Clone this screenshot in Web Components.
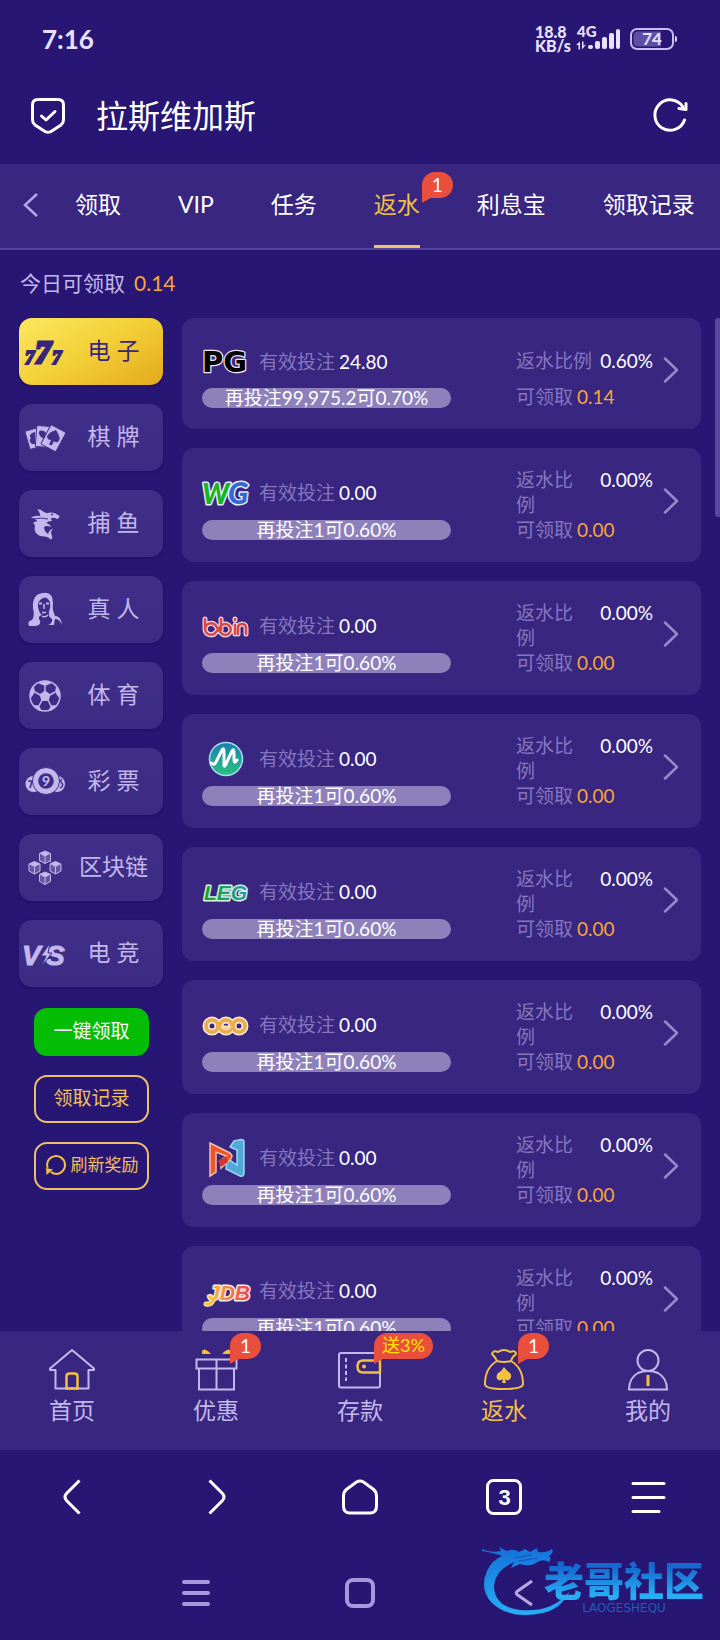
<!DOCTYPE html>
<html lang="zh-CN">
<head>
<meta charset="UTF-8">
<meta name="viewport" content="width=device-width, initial-scale=1">
<title>拉斯维加斯</title>
<style>
    body {
        --bg: #271673;
        --panel: #382680;
        --soft: #c3b8ec;
        --label: #8576be;
        --gold: #f2c144;
        --orange: #f7a53c;
        --red: #ea4f3d;
        margin: 0;
        background: var(--bg);
        color: #fff;
        font-family: Lato, "Noto Sans CJK SC", sans-serif;
        font-size: 19px;
    }
</style>
</head>
<body>
<rebate-app></rebate-app>

<script>
const ICONS = {
    shield: [34, 36, `<g fill="none" stroke="#fff" stroke-width="3" stroke-linecap="round" stroke-linejoin="round"><path d="M7 1.5H27Q32.5 1.5 32.5 7V22Q32.5 25 30 27L20 33.5Q17 35 14 33.5L4 27Q1.5 25 1.5 22V7Q1.5 1.5 7 1.5Z"/><path d="M10.500 18l4.500 4 9-8.500"/></g>`],
    reload: [36, 36, `<g fill="none" stroke="#fff" stroke-width="3" stroke-linecap="round" stroke-linejoin="round"><path d="M32.500 23A15.200 15.200 0 1 1 31 10"/><path d="M34 6.500V12.500L27 11.500"/></g>`],
    prev: [15, 24, `<path d="M14 1L2 12L14 23" fill="none" stroke="#b3a5e6" stroke-width="2.500"/>`],
    next: [16, 26, `<path d="M2 1.500L14 13L2 24.500" fill="none" stroke="#988ac9" stroke-width="2.500" stroke-linecap="round" stroke-linejoin="round"/>`],
    signal: [48, 26, `<text x="2" y="11" font-size="15" font-weight="900" fill="#e9e1ff">4G</text>
        <g fill="#e9e1ff"><path d="M1 19l4-3.500v8H3.500v-4.500zM7 15.500h1.500v4l2.500-1-4 5z"/>
        <rect x="13" y="19" width="5" height="4" rx="2"/><rect x="20" y="15" width="5" height="8" rx="2"/><rect x="27" y="11" width="5" height="12" rx="2"/><rect x="34" y="7" width="5" height="16" rx="2"/><rect x="41" y="3" width="4" height="20" rx="2"/></g>`],
    battery: [48, 22, `<rect x="1" y="1" width="42" height="20" rx="6" fill="none" stroke="#c9bdf2" stroke-width="2"/><path d="M8 3.500H31V18.500H8Q3.500 18.500 3.500 14V8Q3.500 3.500 8 3.500Z" fill="#5e4fa6"/><path d="M45 8q2 0 2 3t-2 3z" fill="#e9e1ff"/><text x="22" y="17" text-anchor="middle" font-size="17" font-weight="bold" fill="#e9e1ff">74</text>`],

    slots: [42, 42, `<g fill="#38267d" font-family="Liberation Serif" font-weight="bold" font-style="italic" stroke="#38267d" stroke-width="2"><text x="1" y="33" font-size="19">7</text><text x="28" y="33" font-size="19">7</text><text x="11" y="32" font-size="32" stroke-width="3">7</text></g>`],
    cards: [42, 42, `<g fill="#c3b8ec" stroke="#41308a" stroke-width="1"><rect x="3" y="12" width="14" height="19" rx="1" transform="rotate(-16 10 21)"/><rect x="12" y="9" width="15" height="21" rx="1" transform="rotate(4 19 20)"/><rect x="21" y="10" width="17" height="22" rx="1" transform="rotate(28 29 21)"/></g>
        <g fill="#41308a"><path d="M8 16q-4 3-1 5-3 3 1 6l3 0V15z"/><path d="M20 14q-6-2-5 3 1 3 5 5l2-6z"/><path d="M32 13q6 9 2 12-3 1-4-1l-2 4h-3l2-5q-4 0-4-4 2-4 9-6z"/></g>`],
    shark: [42, 42, `<path fill="#c3b8ec" d="M13.300 6.200Q17 6 20 9L23 10.200Q29 8 35.300 12.800Q36 15 33 16Q30 14 26.700 15.500L28 18Q23 18 22.700 20.200Q26 21 27 24Q22 22 20 24.200Q20 28 24 31Q25 27 28.700 25.500Q26 30 28 32.500Q29 35 26.700 36.800Q25 34 21 33.500Q11 34 10.500 25Q12 22 9 20Q11 18 13.500 18.200Q11 15 7 14.200Q12 12 16.500 13Q16 9 13.300 6.200Z"/><path d="M10 16Q16 14 24 16" stroke="#41308a" fill="none"/><circle cx="28" cy="11.500" r="1" fill="#41308a"/>`],
    lady: [42, 42, `<path fill="#c3b8ec" d="M19 4Q29 2 29 15Q28 20 31 27Q37 27 38 36Q35 29 31 30Q30 35 30 36H24Q29 34 28 30Q24 28 25 23Q27 18 26 13Q23 7 19 9Q13 12 14 18Q15 24 18 26Q13 27 16 32Q17 36 12 37H5Q3 32 8 31Q11 27 9 19Q8 5 19 4Z"/><g stroke="#c3b8ec" fill="none"><path d="M15 14.500h3M22 14.500h3" stroke-width="2"/><path d="M20 15v5M18 23.500h4M18 27q3 2 6-1" stroke-width="1.500"/></g>`],
    ball: [42, 42, `<circle cx="21" cy="21" r="15" fill="none" stroke="#c3b8ec" stroke-width="1.500"/><path fill="#c3b8ec" d="M21 15.500l5.500 4-2 6.500h-7l-2-6.500zM14 8q7-4 14 0l-7 3zM6 17l4-5 1 5-4 6zM36 17l-4-5-1 5 4 6zM10 30l5 .500 2.500 5q-5-1-7.500-5.500zM32 30l-5 .500-2.500 5q5-1 7.500-5.500z"/><path stroke="#c3b8ec" stroke-width="1.500" d="M21 16v-5M26 20l5-3M16 20l-5-3M18 25l-3 6M24 25l3 6"/>`],
    lottery: [42, 42, `<g fill="#c3b8ec"><circle cx="9.500" cy="23" r="8"/><circle cx="33" cy="23" r="8"/><circle cx="22" cy="20" r="13.500" stroke="#3f2e88"/></g><g fill="none" stroke="#3f2e88" stroke-width="1.500"><path d="M4 20h4l-2 7M38 18q-3 2 0 4 2 3-2 5"/></g><circle cx="22" cy="20" r="7.800" fill="#3f2e88"/><text x="22" y="25" text-anchor="middle" font-size="14" font-weight="900" fill="#c3b8ec">9</text>`],
    chain: [42, 42, `<path d="M21 10L33 20 21 31 10 20Z" fill="none" stroke="#c3b8ec" stroke-dasharray="3 2"/>
        ${[[21, 10], [10.5, 20.5], [31.5, 20.5], [21, 31]].map(([x, y]) => `<g transform="translate(${x} ${y})"><path d="M-5.500-3.500L0-6 5.500-3.500V3.500L0 6.500-5.500 3.500Z" fill="#66559f" stroke="#c3b8ec"/><path d="M-5.500-3.500L0-6 5.500-3.500 0-.500Z" fill="#c3b8ec"/><path d="M0-.500V6.500" stroke="#c3b8ec"/></g>`).join('')}`],
    versus: [42, 42, `<g fill="#c3b8ec" font-family="Liberation Sans" font-style="italic" font-weight="bold" font-size="28" stroke="#c3b8ec"><text x="-2" y="32">V</text><text x="22" y="32">S</text></g><path d="M26 10L17 23h5l-5 11L28 20h-4z" fill="#c3b8ec" stroke="#3f2e88"/>`],
    cycle: [22, 22, `<path d="M2.500 14A9 9 0 1 1 12 20Q8 20 6 18" fill="none" stroke="#f2c144" stroke-width="2"/><path d="M1 14l7 1.500L1.500 21z" fill="#f2c144"/>`],

    pg: [48, 40, `<text x="0" y="31" font-family="DejaVu Sans" font-weight="bold" font-size="29" fill="#000" stroke="#f3e4ef" stroke-width="2.500" stroke-linejoin="round" paint-order="stroke">PG</text>`],
    wg: [48, 40, `<g font-family="Lato" font-weight="900" stroke="#e5eef5" stroke-width="3" stroke-linejoin="round" paint-order="stroke"><text x="26" y="31" font-size="30" font-style="italic" fill="#3467d8">G</text><text x="0" y="31" font-size="28" font-style="italic" fill="#18b51e">W</text></g>`],
    bbin: [48, 40, `<g fill="none" stroke-linecap="round" stroke-linejoin="round"><path d="M3 13V23a6 6 0 0 0 11 3l5-6a5.500 5.500 0 1 1 0 7l-5-7a6 6 0 0 0-11 3M19 13V24M33 19V28M33 13V14M36 28V22q0-4 4-4t4 4v6" stroke="#f1d5ea" stroke-width="5"/><path d="M3 13V23a6 6 0 0 0 11 3l5-6a5.500 5.500 0 1 1 0 7l-5-7a6 6 0 0 0-11 3M19 13V24M33 19V28M33 13V14M36 28V22q0-4 4-4t4 4v6" stroke="#d84a3f" stroke-width="2.500"/></g>`],
    mg: [48, 40, `<defs><linearGradient id="m" x2="0" y2="1"><stop stop-color="#177fb3"/><stop offset="1" stop-color="#2bc280"/></linearGradient></defs><circle cx="24" cy="20" r="16.500" fill="url(#m)" stroke="#a9dbef" stroke-width="1.500"/><path d="M9.500 24Q12 27 14 23L20 11Q22 8 22 13V26Q22 29 24 25L30 12Q32 9 32 14V20Q32 26 35 21" fill="none" stroke="#fff" stroke-width="3" stroke-linecap="round"/>`],
    leg: [48, 40, `<defs><linearGradient id="l"><stop stop-color="#1aa21f"/><stop offset="1" stop-color="#2399be"/></linearGradient></defs><text x="2" y="28" font-family="Liberation Sans" font-style="italic" font-weight="bold" font-size="21" fill="url(#l)" stroke="#d9f4df" stroke-width="3" stroke-linejoin="round" paint-order="stroke">LEG</text>`],
    ceo: [48, 40, `<g fill="none"><g stroke="#ffeedd" stroke-width="7"><circle cx="10" cy="21" r="6"/><circle cx="24" cy="21" r="6"/><circle cx="37" cy="21" r="6"/></g><g stroke="#e9ae50" stroke-width="4"><circle cx="10" cy="21" r="6"/><circle cx="24" cy="21" r="6"/><circle cx="37" cy="21" r="6"/></g><path d="M19 22h10" stroke="#ffdca0" stroke-width="3"/></g>`],
    nn: [48, 40, `<path d="M32 3L39 1.500Q42 1.500 42 4V35Q42 39 38 38L24 31 25 20 35 27V12L28 9Z" fill="#50a9d8" stroke="#9cd6f4" stroke-width="1.500"/><path d="M8 5L28 15Q32 18 28 22L19 30V22L24 18 14 14V34L8 38Z" fill="#ef5528" stroke="#f4c0ad" stroke-width="1.500"/><path d="M16 23l8-5 2 6-7 5z" fill="#d2392a"/>`],
    jdb: [48, 40, `<defs><linearGradient id="j"><stop stop-color="#f7c42c"/><stop offset="1" stop-color="#eb3f52"/></linearGradient></defs><path d="M4 33Q10 34 12 27" fill="none" stroke="#ffe9e3" stroke-width="5" stroke-linecap="round"/><text x="6" y="29" font-family="Liberation Sans" font-style="italic" font-weight="bold" font-size="21" fill="url(#j)" stroke="#ffe9e3" stroke-width="3" stroke-linejoin="round" paint-order="stroke">JDB</text><path d="M4 33Q10 34 12 27" fill="none" stroke="#f7c42c" stroke-width="3" stroke-linecap="round"/>`],

    house: [48, 44, `<path d="M24 2L2 20.500V22H7.500V40.500H40.500V22H46V20.500Z" fill="none" stroke="#c3b8ec" stroke-width="2" stroke-linejoin="round"/><path d="M18.500 40.500V28.500Q18.500 25.500 21.500 25.500H26.500Q29.500 25.500 29.500 28.500V40.500Z" fill="none" stroke="#f2c144" stroke-width="2.500"/>`],
    gift: [48, 44, `<path d="M4.500 11.500H44.500V20.500H4.500ZM7 20.500H42V41.500H7ZM24.500 11.500V41.500" fill="none" stroke="#c3b8ec" stroke-width="2"/><path d="M10 2.500L13 1.500Q17 3 19 6H10ZM39 2.500L36 1.500Q32 3 30 6H39Z" fill="#f2c144"/>`],
    wallet: [48, 44, `<rect x="3" y="5" width="41" height="34.500" rx="2" fill="none" stroke="#c3b8ec" stroke-width="2"/><path d="M10 10V33" stroke="#c3b8ec" stroke-width="2" stroke-dasharray="4 2.500"/><path d="M44 12.500H27Q21.500 12.500 21.500 18.500T27 24.500H44Z" fill="none" stroke="#f2c144" stroke-width="2.500"/><circle cx="28" cy="18.500" r="2" fill="#f2c144"/>`],
    bag: [48, 44, `<g fill="none" stroke="#f2c144" stroke-width="2" stroke-linejoin="round"><path d="M17 13Q16 10 12 6Q13 2 18 4Q24 0 30 4Q36 2 36 6Q32 9 31 13Q24 15 17 13Z"/><path d="M17 13Q5 20 5 36Q5 41 24 41Q43 41 43 36Q43 20 31 13"/></g><path d="M24 19Q27 23 30 25Q33 29 29 32Q26 33 25 31L26 35H22L23 31Q21 33 18 32Q15 29 18 25Q22 23 24 19Z" fill="#f2c144"/>`],
    person: [48, 44, `<g fill="none" stroke="#c3b8ec" stroke-width="2"><circle cx="24" cy="12.500" r="10.500"/><path d="M5 41.500Q5 30 14 25Q18 23 24 23T34 25Q43 30 43 41.500Z"/></g><path d="M24 27V38" stroke="#f2c144" stroke-width="3"/>`],

    back: [36, 36, `<path d="M25.500 1.500L12.500 14.500Q9.500 18 12.500 21.500L25.500 34.500" fill="none" stroke="#fff" stroke-width="3"/>`],
    forward: [36, 36, `<path d="M11.500 1.500L24.500 14.500Q27.500 18 24.500 21.500L11.500 34.500" fill="none" stroke="#fff" stroke-width="3"/>`],
    home: [36, 36, `<path d="M14.500 3Q18 1 21.500 3L31 10Q34.500 12.500 34.500 17V27Q34.500 34 28 34H8Q1.500 34 1.500 27V17Q1.500 12.500 5 10Z" fill="none" stroke="#fff" stroke-width="3"/>`],
    pages: [36, 36, `<rect x="1.500" y="1.500" width="33" height="33" rx="6" fill="none" stroke="#fff" stroke-width="3"/><text x="18.500" y="26" text-anchor="middle" font-size="22" font-weight="bold" fill="#fff">3</text>`],
    menu: [36, 36, `<path d="M3 4.500H34M3 18.500H34M3 32.500H29" stroke="#fff" stroke-width="3" stroke-linecap="round"/>`],
    recent: [28, 30, `<path d="M2 4H26M2 15H26M2 26H26" stroke="#a698dc" stroke-width="4" stroke-linecap="round"/>`],
    square: [30, 30, `<rect x="2" y="2" width="26" height="26" rx="6" fill="none" stroke="#a698dc" stroke-width="4"/>`],
    leave: [20, 28, `<path d="M18 2L3 12.500Q1.500 14 3 15.500L18 26" fill="none" stroke="#b5a9e3" stroke-width="3"/>`],
    dragon: [94, 72, `<defs><linearGradient id="d" x2="0" y2="1"><stop stop-color="#1471d8"/><stop offset="1" stop-color="#27aef5"/></linearGradient></defs><path fill="url(#d)" d="M0 3Q8 7 19 5L17 1 25 5Q31 2 37 6L43 3 48 6 55 2 56 6Q64 7 70 3Q72 7 67 10Q70 13 67 16Q60 12 54 17Q48 21 38 18L29 22 32 16Q12 25 12 42Q14 61 38 64Q70 67 88 45Q79 63 61 67Q28 74 10 57Q-3 43 5 25Q10 14 20 10Q12 7 0 5Z"/><path d="M32 12L50 9M37 15L56 12" stroke="#1453b4" fill="none"/>`],
};

// Creates a custom element class whose shadow root is cloned from a template
function define(name, html, connected) {
    const template = document.createElement('template');
    template.innerHTML = html;
    customElements.define(name, class extends HTMLElement {
        constructor() {
            super();
            this.attachShadow({ mode: 'open' }).appendChild(template.content.cloneNode(true));
        }

        connectedCallback() {
            if (connected) connected(this, this.shadowRoot);
        }
    });
}

define('ui-icon', `
    <style>
        :host { display: inline-flex; flex: none; }
        svg { display: block; overflow: visible; }
    </style>
`, (el, root) => {
    const [w, h, body] = ICONS[el.getAttribute('name')];
    root.innerHTML += `<svg width="${w}" height="${h}" viewBox="0 0 ${w} ${h}" aria-hidden="true">${body}</svg>`;
});

define('corner-badge', `
    <style>
        :host {
            position: absolute;
            box-sizing: border-box;
            min-width: 31px;
            height: 26px;
            padding: 0 8px;
            border-radius: 13px 13px 13px 0;
            background: var(--red);
            color: #fff;
            font-size: 19px;
            line-height: 25px;
            text-align: center;
            white-space: nowrap;
        }
        :host([hot]) { color: #ffe500; font-size: 18px; }
        :host::after {
            content: "";
            position: absolute;
            left: 0;
            top: 100%;
            width: 9px;
            height: 5px;
            background: var(--red);
            clip-path: polygon(0 0, 100% 0, 0 100%);
        }
    </style>
    <slot></slot>
`);

define('status-bar', `
    <style>
        :host {
            display: flex;
            align-items: center;
            justify-content: space-between;
            height: 78px;
            padding: 0 42px;
            color: #e9e1ff;
            font-weight: bold;
        }
        time { font-size: 26px; }
        .right { display: flex; align-items: center; }
        .speed { width: 40px; font-size: 16px; font-weight: 900; line-height: 14px; }
        .battery { margin-left: 7px; }
    </style>
    <time>7:16</time>
    <div class="right">
        <div class="speed">18.8<br>KB/s</div>
        <ui-icon name="signal"></ui-icon>
        <ui-icon class="battery" name="battery"></ui-icon>
    </div>
`);

define('title-bar', `
    <style>
        :host {
            display: flex;
            align-items: center;
            height: 76px;
            padding: 0 32px 10px 31px;
        }
        h1 {
            flex: 1;
            margin: 0 0 0 31px;
            font-size: 32px;
            font-weight: 400;
            line-height: 40px;
        }
        button { padding: 0; border: 0; background: none; }
    </style>
    <ui-icon name="shield"></ui-icon>
    <h1><slot></slot></h1>
    <button aria-label="刷新"><ui-icon name="reload"></ui-icon></button>
`);

define('tab-link', `
    <style>
        :host { display: block; flex: none; }
        a {
            position: relative;
            display: block;
            color: #fff;
            font-size: 23px;
            line-height: 81px;
            border-bottom: 3px solid transparent;
            text-decoration: none;
        }
        :host([active]) a { color: var(--gold); border-color: #ecc665; }
        ::slotted(corner-badge) { left: 48px; top: 8px; }
    </style>
    <a href="#"><slot></slot></a>
`);

define('tab-strip', `
    <style>
        :host {
            display: flex;
            align-items: center;
            gap: 37px;
            padding-left: 23px;
            background: var(--panel);
            border-bottom: 2px solid #5444a0;
            overflow: hidden;
        }
        button { padding: 0; border: 0; background: none; }
        nav { display: flex; gap: 57px; }
    </style>
    <button aria-label="返回"><ui-icon name="prev"></ui-icon></button>
    <nav><slot></slot></nav>
`);

define('category-button', `
    <style>
        :host { display: block; }
        button {
            display: flex;
            align-items: center;
            width: 100%;
            height: 67px;
            padding: 0 2px 0 5px;
            border: 0;
            border-radius: 13px;
            background: linear-gradient(#402f88, #3c2b85);
            box-shadow: 0 1px 3px rgba(20, 8, 85, 0.4);
            color: var(--soft);
            font-family: inherit;
            font-size: 23px;
            line-height: 30px;
        }
        span { flex: 1; padding-bottom: 3px; text-align: center; }
        :host([active]) button {
            background: linear-gradient(150deg, #fbe85f, #f3cf36 50%, #e3a91d);
            color: #38267d;
        }
    </style>
    <button></button>
`, (el, root) => {
    root.querySelector('button').innerHTML = `<ui-icon name="${el.getAttribute('icon')}"></ui-icon><span><slot></slot></span>`;
});

define('action-button', `
    <style>
        :host { display: block; }
        button {
            display: flex;
            align-items: center;
            justify-content: center;
            gap: 4px;
            width: 100%;
            height: 48px;
            padding: 0 0 3px;
            border: 2px solid #ecc06a;
            border-radius: 13px;
            background: none;
            color: #f0c05a;
            font-family: inherit;
            font-size: 19px;
            line-height: 26px;
            white-space: nowrap;
        }
        :host([primary]) button {
            border-color: #04bd04;
            background: #04bd04;
            color: #fff;
        }
        :host([small]) button { font-size: 17px; }
    </style>
    <button><slot></slot></button>
`);

define('rebate-card', `
    <style>
        :host {
            display: grid;
            grid-template-columns: minmax(0, 1fr) 137px 16px;
            column-gap: 10px;
            align-items: center;
            padding: 19px 22px 20px 20px;
            border-radius: 12px;
            background: var(--panel);
            color: #fff;
            font-size: 19px;
            line-height: 25px;
        }
        .left { max-width: 249px; }
        .label { color: var(--label); }
        .claim b { color: var(--orange); font-weight: 400; }
        .bet { display: flex; align-items: center; height: 46px; }
        .bet .label { margin: 0 4px 0 9px; }
        .bar {
            margin-top: 4px;
            height: 20px;
            border-radius: 10px;
            background: #8d80bb;
            line-height: 19px;
            text-align: center;
            white-space: nowrap;
        }
        .ratio { display: flex; justify-content: space-between; min-height: 47px; }
        .ratio .label { white-space: nowrap; }
        :host(:not([wrapped])) .ratio { align-items: center; }
        :host([wrapped]) .ratio .label { max-width: 60px; white-space: normal; }
        .claim .label { margin-right: 4px; }
        button { padding: 0 0 4px; border: 0; background: none; }
    </style>
    <div class="left">
        <div class="bet"><i></i><span class="label">有效投注</span><span class="amount"></span></div>
        <div class="bar"></div>
    </div>
    <div class="info">
        <div class="ratio"><span class="label">返水比例</span><span class="percent"></span></div>
        <div class="claim"><span class="label">可领取</span><b></b></div>
    </div>
    <button aria-label="详情"><ui-icon name="next"></ui-icon></button>
`, (el, root) => {
    root.querySelector('i').outerHTML = `<ui-icon name="${el.getAttribute('logo')}"></ui-icon>`;
    root.querySelector('.amount').textContent = el.getAttribute('amount') || '0.00';
    root.querySelector('.bar').textContent = el.getAttribute('hint') || '再投注1可0.60%';
    root.querySelector('.percent').textContent = el.getAttribute('percent') || '0.00%';
    root.querySelector('b').textContent = el.getAttribute('claim') || '0.00';
});

define('rebate-panel', `
    <style>
        :host {
            display: flex;
            flex-direction: column;
            flex: 1;
            min-height: 0;
            overflow: hidden;
        }
        .today {
            padding: 18px 20px 20px;
            color: var(--soft);
            font-size: 21px;
            line-height: 30px;
        }
        .today b { margin-left: 9px; color: var(--orange); font-weight: 400; }
        .columns { display: flex; flex: 1; min-height: 0; padding-left: 19px; }
        aside { flex: none; width: 144px; }
        .categories { display: grid; gap: 19px; }
        .actions { display: grid; gap: 19px; margin: 21px 14px 0 15px; }
        .list {
            display: flex;
            flex: 1;
            flex-direction: column;
            gap: 19px;
            margin: 0 14px 0 19px;
            overflow: hidden;
        }
        .list rebate-card { flex: none; }
        .thumb { width: 5px; height: 199px; border-radius: 3px 0 0 3px; background: #5546a0; }
    </style>
    <div class="today">今日可领取<b>0.14</b></div>
    <div class="columns">
        <aside>
            <div class="categories">
                <category-button icon="slots" active>电 子</category-button>
                <category-button icon="cards">棋 牌</category-button>
                <category-button icon="shark">捕 鱼</category-button>
                <category-button icon="lady">真 人</category-button>
                <category-button icon="ball">体 育</category-button>
                <category-button icon="lottery">彩 票</category-button>
                <category-button icon="chain">区块链</category-button>
                <category-button icon="versus">电 竞</category-button>
            </div>
            <div class="actions">
                <action-button primary>一键领取</action-button>
                <action-button>领取记录</action-button>
                <action-button small><ui-icon name="cycle"></ui-icon>刷新奖励</action-button>
            </div>
        </aside>
        <div class="list">
            <rebate-card logo="pg" amount="24.80" hint="再投注99,975.2可0.70%" percent="0.60%" claim="0.14"></rebate-card>
            <rebate-card logo="wg" wrapped></rebate-card>
            <rebate-card logo="bbin" wrapped></rebate-card>
            <rebate-card logo="mg" wrapped></rebate-card>
            <rebate-card logo="leg" wrapped></rebate-card>
            <rebate-card logo="ceo" wrapped></rebate-card>
            <rebate-card logo="nn" wrapped></rebate-card>
            <rebate-card logo="jdb" wrapped></rebate-card>
        </div>
        <div class="thumb"></div>
    </div>
`);

define('dock-item', `
    <style>
        :host { display: block; }
        a {
            position: relative;
            display: flex;
            flex-direction: column;
            align-items: center;
            gap: 4px;
            padding: 17px 0 26px;
            color: var(--soft);
            font-size: 23px;
            line-height: 28px;
            text-decoration: none;
        }
        :host([active]) a { color: var(--gold); }
        ::slotted(corner-badge) { left: calc(50% + 14px); top: 2px; }
    </style>
    <a href="#"></a>
`, (el, root) => {
    root.querySelector('a').innerHTML = `<ui-icon name="${el.getAttribute('icon')}"></ui-icon><span>${el.getAttribute('label')}</span><slot></slot>`;
});

define('app-dock', `
    <style>
        :host {
            display: grid;
            grid-template-columns: repeat(5, 1fr);
            background: var(--panel);
        }
    </style>
    <slot></slot>
`);

define('browser-nav', `
    <style>
        :host {
            display: grid;
            grid-template-columns: repeat(5, 1fr);
            align-items: center;
            justify-items: center;
            height: 96px;
        }
        button { padding: 0; border: 0; background: none; }
    </style>
    <button aria-label="后退"><ui-icon name="back"></ui-icon></button>
    <button aria-label="前进"><ui-icon name="forward"></ui-icon></button>
    <button aria-label="主页"><ui-icon name="home"></ui-icon></button>
    <button aria-label="窗口"><ui-icon name="pages"></ui-icon></button>
    <button aria-label="菜单"><ui-icon name="menu"></ui-icon></button>
`);

define('forum-mark', `
    <style>
        :host {
            position: absolute;
            right: 16px;
            top: 0;
            width: 222px;
            line-height: 1;
        }
        .words {
            position: absolute;
            right: 0;
            top: 15px;
            display: grid;
            justify-items: center;
        }
        .name {
            font-size: 40px;
            font-weight: 900;
            line-height: 40px;
            background: linear-gradient(#1568cf 15%, #27aef5 85%);
            background-clip: text;
            color: transparent;
        }
        .latin { color: #1b5fb9; font: 12px/14px "DejaVu Sans", sans-serif; }
    </style>
    <ui-icon name="dragon"></ui-icon>
    <div class="words"><span class="name">老哥社区</span><span class="latin">LAOGESHEQU</span></div>
`);

define('system-nav', `
    <style>
        :host {
            position: relative;
            display: flex;
            align-items: center;
            justify-content: center;
            gap: 134px;
            height: 94px;
        }
        button {
            position: relative;
            display: grid;
            place-items: center;
            width: 30px;
            padding: 0;
            border: 0;
            background: none;
        }
    </style>
    <forum-mark></forum-mark>
    <button aria-label="最近"><ui-icon name="recent"></ui-icon></button>
    <button aria-label="桌面"><ui-icon name="square"></ui-icon></button>
    <button aria-label="返回"><ui-icon name="leave"></ui-icon></button>
`);

define('rebate-app', `
    <style>
        :host { display: flex; flex-direction: column; height: 100vh; overflow: hidden; }
        status-bar, title-bar, tab-strip, app-dock, browser-nav, system-nav { flex: none; }
    </style>
    <status-bar></status-bar>
    <title-bar>拉斯维加斯</title-bar>
    <tab-strip>
        <tab-link>领取</tab-link>
        <tab-link>VIP</tab-link>
        <tab-link>任务</tab-link>
        <tab-link active>返水<corner-badge>1</corner-badge></tab-link>
        <tab-link>利息宝</tab-link>
        <tab-link>领取记录</tab-link>
    </tab-strip>
    <rebate-panel></rebate-panel>
    <app-dock>
        <dock-item icon="house" label="首页"></dock-item>
        <dock-item icon="gift" label="优惠"><corner-badge>1</corner-badge></dock-item>
        <dock-item icon="wallet" label="存款"><corner-badge hot>送3%</corner-badge></dock-item>
        <dock-item icon="bag" label="返水" active><corner-badge>1</corner-badge></dock-item>
        <dock-item icon="person" label="我的"></dock-item>
    </app-dock>
    <browser-nav></browser-nav>
    <system-nav></system-nav>
`);
</script>
</body>
</html>
